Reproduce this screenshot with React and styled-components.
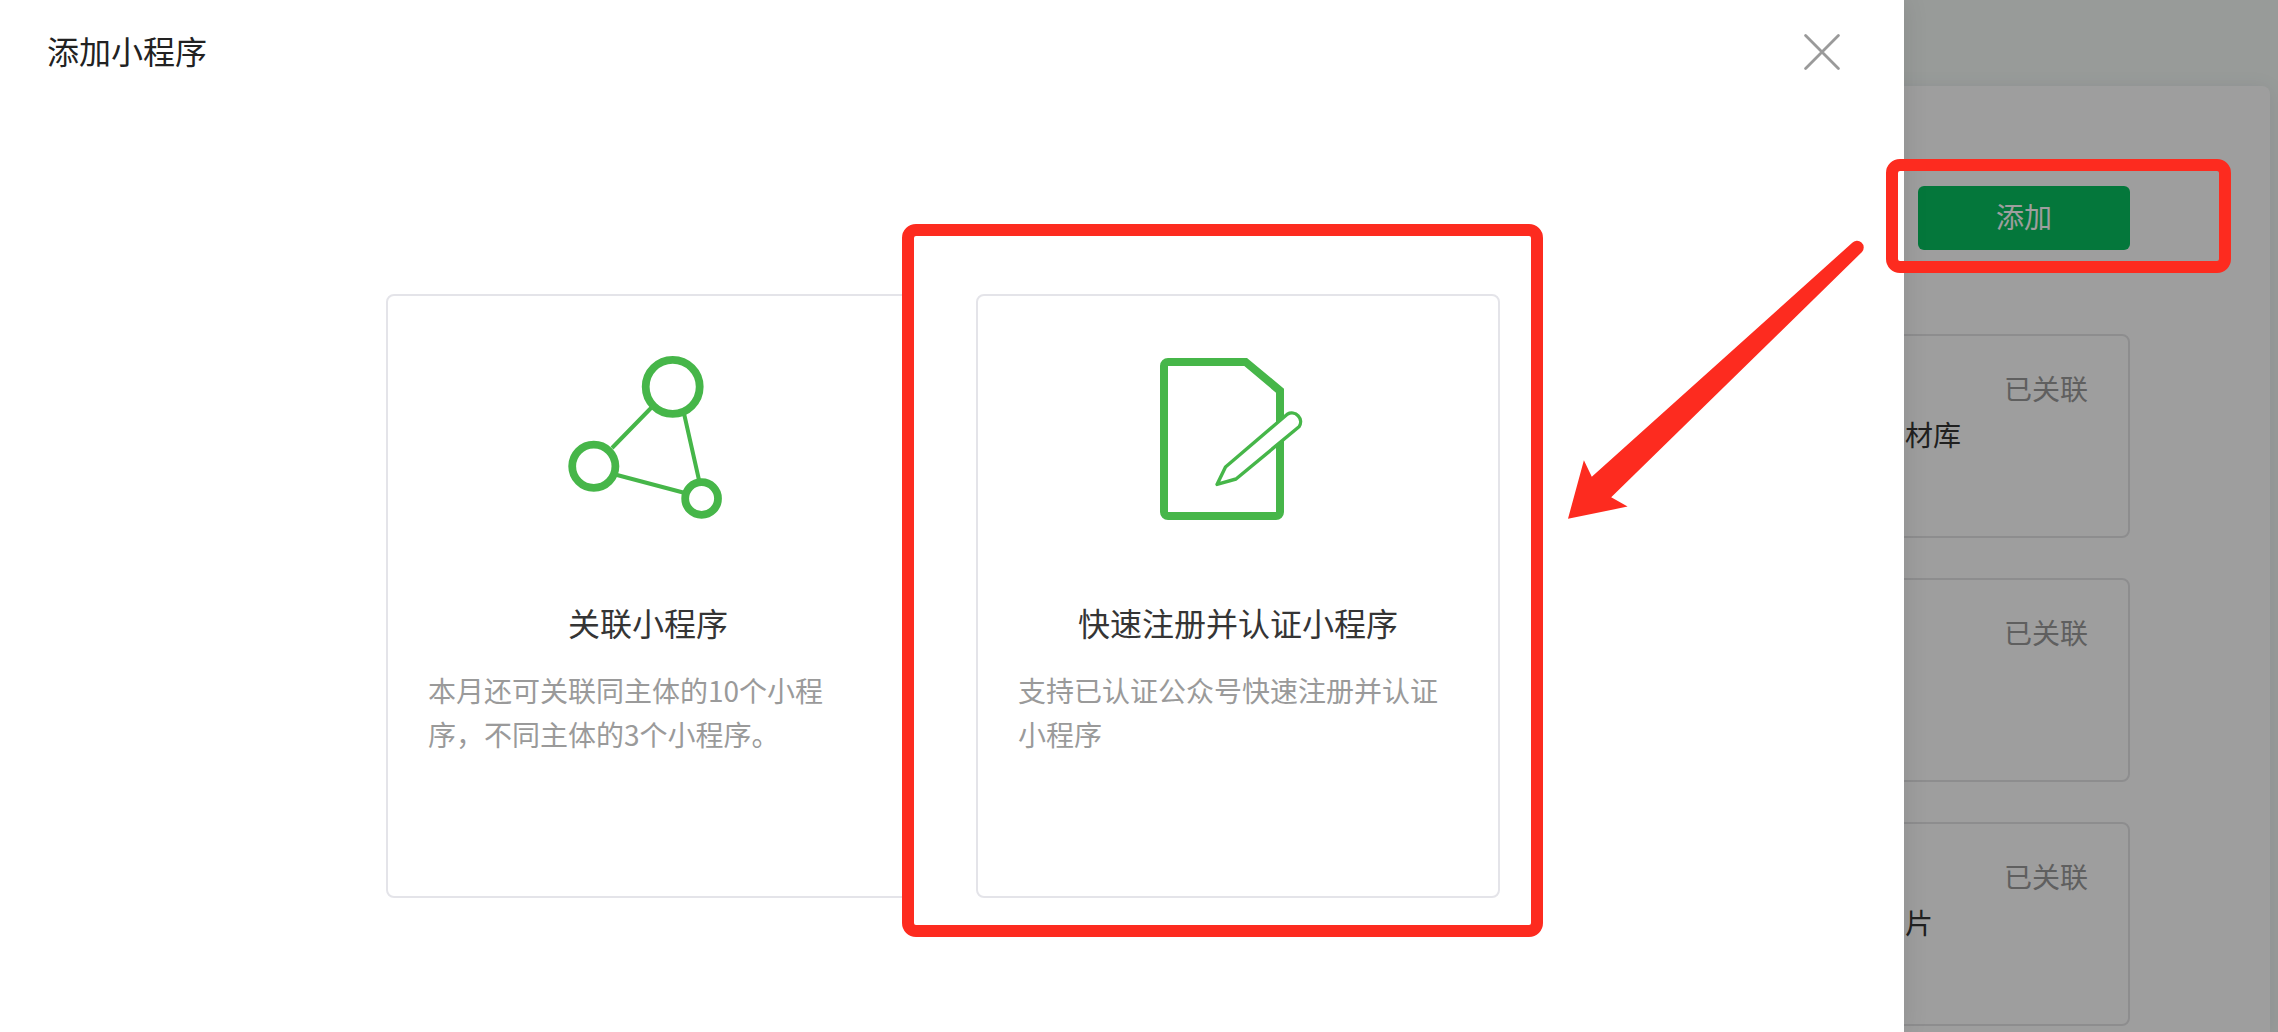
import React from 'react';
import styled, { createGlobalStyle } from 'styled-components';

const GlobalStyle = createGlobalStyle`
    * {
        box-sizing: border-box;
    }
    body {
        margin: 0;
        font-family: "Noto Sans CJK SC", sans-serif;
        font-size: 28px;
        line-height: 44px;
        color: #353535;
    }
    h2, h3, p, ul {
        margin: 0;
        padding: 0;
        font-weight: 400;
    }
    button {
        font-family: inherit;
        cursor: pointer;
    }
`;

const Page = styled.div`
    position: relative;
    display: flex;
    flex-direction: column;
    min-height: 100vh;
    padding: 86px 8px 0 0;
    overflow: hidden;
    background-color: #f5faf7;
`;

const Panel = styled.main`
    flex: 1;
    display: flex;
    flex-direction: column;
    align-items: flex-end;
    padding: 100px 140px 6px 0;
    border-radius: 8px 8px 0 0;
    background-color: #ffffff;
    box-shadow: 0 2px 20px rgba(28, 31, 80, 0.08);
`;

const AddBtn = styled.button`
    width: 212px;
    height: 64px;
    margin-bottom: 84px;
    padding: 0 0 4px;
    border: none;
    border-radius: 6px;
    background-color: #07c160;
    color: #ffffff;
    font-size: 28px;
    line-height: 44px;
`;

const LinkedList = styled.ul`
    display: flex;
    flex-direction: column;
    gap: 40px;
    width: 524px;
    list-style: none;
`;

const LinkedItem = styled.li`
    display: flex;
    justify-content: flex-end;
    height: 204px;
    padding: 30px 40px;
    border: 2px solid #e4e4e6;
    border-radius: 8px;
`;

const LinkedInfo = styled.div`
    width: 183px;
`;

const Status = styled.p`
    text-align: right;
    color: #9a9a9a;
`;

const Name = styled.p`
    margin-top: 2px;
`;

const Mask = styled.div`
    position: absolute;
    inset: 0;
    background-color: rgba(0, 0, 0, 0.38);
`;

const Dialog = styled.section`
    position: absolute;
    top: 0;
    right: 374px;
    bottom: 0;
    left: 0;
    background-color: #ffffff;
    box-shadow: 0 0 24px rgba(0, 0, 0, 0.1);
`;

const DialogHeader = styled.header`
    display: flex;
    justify-content: space-between;
    align-items: center;
    height: 104px;
    padding: 0 64px 0 47px;
`;

const DialogTitle = styled.h2`
    padding-bottom: 4px;
    font-size: 32px;
    line-height: 48px;
    color: #222222;
`;

const CloseBtn = styled.button`
    display: flex;
    padding: 0;
    border: none;
    background: none;
    color: #9a9a9a;
`;

const Choices = styled.div`
    display: flex;
    justify-content: center;
    gap: 66px;
    padding: 190px 18px 0 0;
`;

const Choice = styled.div`
    position: relative;
    display: flex;
    flex-direction: column;
    align-items: center;
    width: 524px;
    min-height: 604px;
    padding: 59px 40px;
    border: 2px solid #e4e4e9;
    border-radius: 8px;
`;

const ChoiceTitle = styled.h3`
    margin-top: 77px;
    font-size: 32px;
    line-height: 48px;
`;

const ChoiceText = styled.p`
    align-self: stretch;
    margin-top: 22px;
    color: #9a9a9a;
`;

const Highlight = styled.div`
    position: absolute;
    border: 12px solid #fd2b1f;
    border-radius: 14px;
    pointer-events: none;
`;

const ChoiceHighlight = styled(Highlight)`
    top: -72px;
    right: -45px;
    bottom: -41px;
    left: -76px;
`;

const AddHighlight = styled(Highlight)`
    top: 159px;
    right: 47px;
    width: 345px;
    height: 114px;
`;

const Arrow = styled.svg`
    position: absolute;
    top: 240px;
    right: 40px;
`;

const CloseIcon = () => (
    <svg width="36" height="36" viewBox="0 0 36 36" fill="none" stroke="currentColor" strokeWidth="2.8" strokeLinecap="round">
        <path d="M1.6 1.6 34.4 34.4M34.4 1.6 1.6 34.4" />
    </svg>
);

const LinkIcon = () => (
    <svg width="166" height="166" viewBox="0 0 166 166" fill="none" stroke="#46b649">
        <path d="M87 52 47 93M118 54l16 71M52 120l68 18" strokeWidth="4" />
        <g strokeWidth="7.8">
            <circle cx="107.7" cy="31.8" r="27" />
            <circle cx="28.8" cy="111.2" r="21.6" />
            <circle cx="136.6" cy="143.5" r="16.4" />
        </g>
    </svg>
);

const RegisterIcon = () => (
    <svg width="166" height="166" viewBox="0 0 166 166">
        <path
            fill="#46b649"
            fillRule="evenodd"
            d="M13 3H92L129 33.7V157a8 8 0 0 1-8 8H13a8 8 0 0 1-8-8V11a8 8 0 0 1 8-8ZM13 11V157H121V37.7L89.3 11Z"
        />
        <path
            fill="#ffffff"
            stroke="#46b649"
            strokeWidth="3.4"
            strokeLinejoin="round"
            d="M70.5 112 132.3 59.2A8.8 8.8 0 0 1 144 71.8L81 124 62 129.4Z"
        />
    </svg>
);

const linked = [
    { id: 1, name: '材库' },
    { id: 2, name: '' },
    { id: 3, name: '片' },
];

const App = () => {
    return (
        <Page>
            <GlobalStyle />
            <Panel>
                <AddBtn type="button">添加</AddBtn>
                <LinkedList>
                    {linked.map(item => (
                        <LinkedItem key={item.id}>
                            <LinkedInfo>
                                <Status>已关联</Status>
                                <Name>{item.name}</Name>
                            </LinkedInfo>
                        </LinkedItem>
                    ))}
                </LinkedList>
            </Panel>
            <Mask />
            <Dialog role="dialog" aria-labelledby="dialog-title">
                <DialogHeader>
                    <DialogTitle id="dialog-title">添加小程序</DialogTitle>
                    <CloseBtn type="button" aria-label="关闭">
                        <CloseIcon />
                    </CloseBtn>
                </DialogHeader>
                <Choices>
                    <Choice>
                        <LinkIcon />
                        <ChoiceTitle>关联小程序</ChoiceTitle>
                        <ChoiceText>本月还可关联同主体的10个小程序，不同主体的3个小程序。</ChoiceText>
                    </Choice>
                    <Choice>
                        <RegisterIcon />
                        <ChoiceTitle>快速注册并认证小程序</ChoiceTitle>
                        <ChoiceText>支持已认证公众号快速注册并认证小程序</ChoiceText>
                        <ChoiceHighlight />
                    </Choice>
                </Choices>
                <Arrow width="296" height="280" viewBox="0 0 296 280" fill="#fd2b1f">
                    <path d="M0 278.7 15.9 220.3 23.8 236.8 284 3A6.3 6.3 0 0 1 294 12L43.2 257.3 59.6 266.6Z" />
                </Arrow>
            </Dialog>
            <AddHighlight />
        </Page>
    );
};

export default App;
